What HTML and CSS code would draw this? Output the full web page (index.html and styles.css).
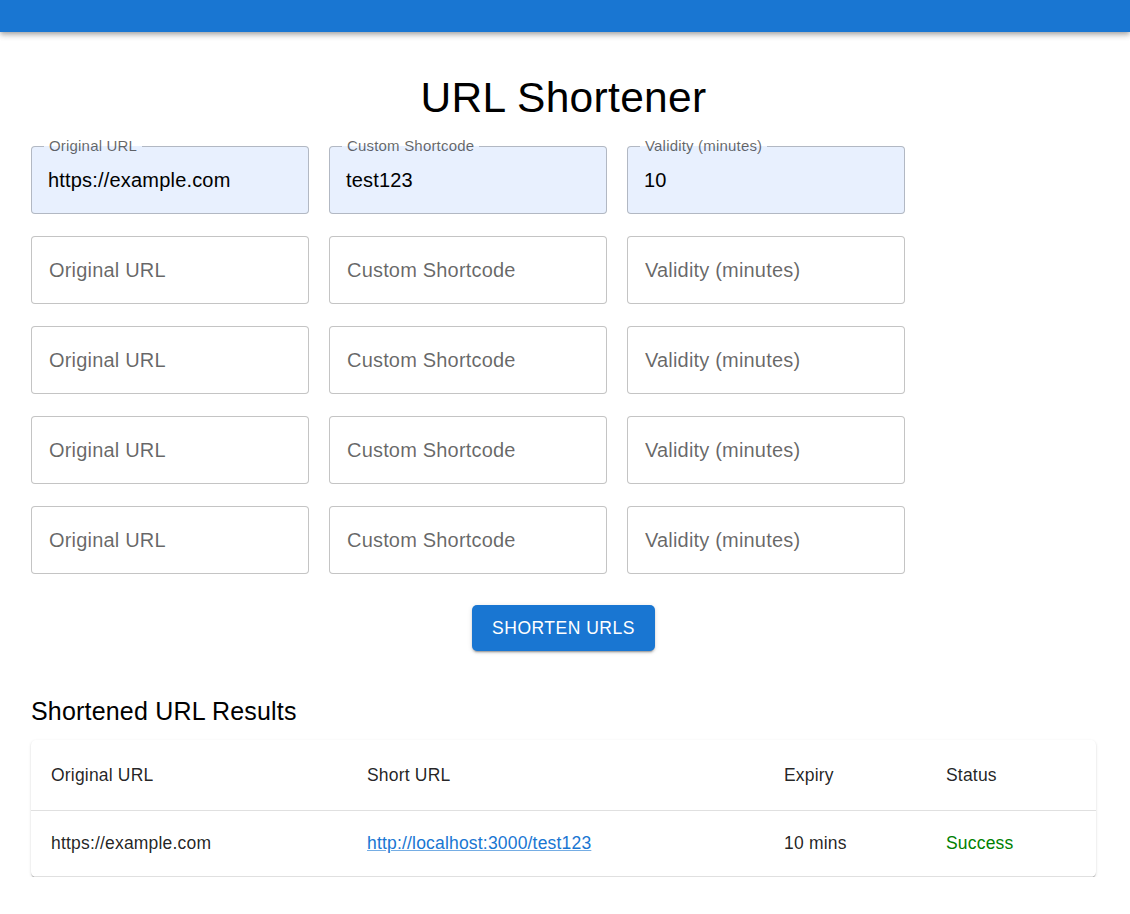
FILE: index.html
```html
<!DOCTYPE html>
<html lang="en">
<head>
<meta charset="utf-8">
<title>URL Shortener</title>
<link rel="stylesheet" href="styles.css">
</head>
<body>
<header class="appbar"></header>
<main class="page">
  <h1 class="title">URL Shortener</h1>
  <div class="form-grid">
    <div class="field filled"><span class="field-label">Original URL</span><span class="value">https://example.com</span></div>
    <div class="field filled"><span class="field-label">Custom Shortcode</span><span class="value">test123</span></div>
    <div class="field filled"><span class="field-label">Validity (minutes)</span><span class="value">10</span></div>

    <div class="field"><span class="placeholder">Original URL</span></div>
    <div class="field"><span class="placeholder">Custom Shortcode</span></div>
    <div class="field"><span class="placeholder">Validity (minutes)</span></div>

    <div class="field"><span class="placeholder">Original URL</span></div>
    <div class="field"><span class="placeholder">Custom Shortcode</span></div>
    <div class="field"><span class="placeholder">Validity (minutes)</span></div>

    <div class="field"><span class="placeholder">Original URL</span></div>
    <div class="field"><span class="placeholder">Custom Shortcode</span></div>
    <div class="field"><span class="placeholder">Validity (minutes)</span></div>

    <div class="field"><span class="placeholder">Original URL</span></div>
    <div class="field"><span class="placeholder">Custom Shortcode</span></div>
    <div class="field"><span class="placeholder">Validity (minutes)</span></div>
  </div>
  <div class="actions">
    <button class="btn" type="button">Shorten URLs</button>
  </div>
  <h2 class="subtitle">Shortened URL Results</h2>
  <div class="paper">
    <table class="results">
      <colgroup>
        <col class="c1"><col class="c2"><col class="c3"><col class="c4">
      </colgroup>
      <thead>
        <tr><th>Original URL</th><th>Short URL</th><th>Expiry</th><th>Status</th></tr>
      </thead>
      <tbody>
        <tr>
          <td>https://example.com</td>
          <td><a class="link" href="#">http://localhost:3000/test123</a></td>
          <td>10 mins</td>
          <td class="success">Success</td>
        </tr>
      </tbody>
    </table>
  </div>
</main>
</body>
</html>
```

FILE: styles.css
```css
html, body {
  margin: 0;
  padding: 0;
  background: #fff;
  font-family: "Liberation Sans", Arial, sans-serif;
  color: rgba(0, 0, 0, 0.87);
}

.appbar {
  height: 32px;
  background: #1976d2;
  box-shadow: 0 2px 4px -1px rgba(0,0,0,0.2), 0 4px 5px 0 rgba(0,0,0,0.14), 0 1px 10px 0 rgba(0,0,0,0.12);
}

.page {
  padding: 0 34px 0 31px;
}

.title {
  margin: 40px 0 22px;
  font-size: 42.5px;
  line-height: 52px;
  font-weight: 400;
  letter-spacing: 0.00735em;
  text-align: center;
  color: #000;
}

.form-grid {
  display: grid;
  grid-template-columns: repeat(3, 278px);
  grid-auto-rows: 68px;
  column-gap: 20px;
  row-gap: 22px;
}

.field {
  position: relative;
  box-sizing: border-box;
  border: 1px solid rgba(0, 0, 0, 0.23);
  border-radius: 4px;
  display: flex;
  align-items: center;
  padding: 0 16px;
  font-size: 20px;
  letter-spacing: 0.00938em;
  background: #fff;
}

.field.filled {
  background: #e8f0fe;
}

.field-label {
  position: absolute;
  top: -9px;
  left: 12px;
  padding: 0 5px;
  font-size: 15px;
  line-height: 15px;
  color: rgba(0, 0, 0, 0.6);
  background: linear-gradient(#fff 0, #fff 8px, #e8f0fe 8px);
}

.value {
  color: #000;
}

.placeholder {
  color: rgba(0, 0, 0, 0.6);
  padding-left: 1px;
}

.actions {
  display: flex;
  justify-content: center;
  margin-top: 31px;
}

.btn {
  font-family: "Liberation Sans", Arial, sans-serif;
  font-size: 17.5px;
  line-height: 31px;
  letter-spacing: 0.5px;
  text-transform: uppercase;
  font-weight: 400;
  color: #fff;
  background: #1976d2;
  border: 0;
  border-radius: 5px;
  padding: 7.5px 20px;
  box-shadow: 0 3px 1px -2px rgba(0,0,0,0.2), 0 2px 2px 0 rgba(0,0,0,0.14), 0 1px 5px 0 rgba(0,0,0,0.12);
}

.subtitle {
  margin: 40px 0 9px;
  font-size: 25px;
  line-height: 40px;
  font-weight: 400;
  letter-spacing: 0.0075em;
  color: #000;
}

.paper {
  background: #fff;
  border-radius: 5px;
  box-shadow: 0 2px 1px -1px rgba(0,0,0,0.2), 0 1px 1px 0 rgba(0,0,0,0.14), 0 1px 3px 0 rgba(0,0,0,0.12);
  overflow: hidden;
}

.results {
  width: 100%;
  border-collapse: collapse;
  table-layout: fixed;
  font-size: 17.5px;
  letter-spacing: 0.01071em;
}

.c1 { width: 316px; }
.c2 { width: 417px; }
.c3 { width: 162px; }
.c4 { width: auto; }

.results th {
  text-align: left;
  font-weight: 400;
  line-height: 30px;
  padding: 20px;
  border-bottom: 1px solid #e0e0e0;
}

.results td {
  line-height: 25px;
  padding: 20px;
  border-bottom: 1px solid #e0e0e0;
}

.link {
  color: #1976d2;
  text-decoration: underline;
  text-decoration-color: rgba(25, 118, 210, 0.6);
}

.success {
  color: #008000;
}
```
